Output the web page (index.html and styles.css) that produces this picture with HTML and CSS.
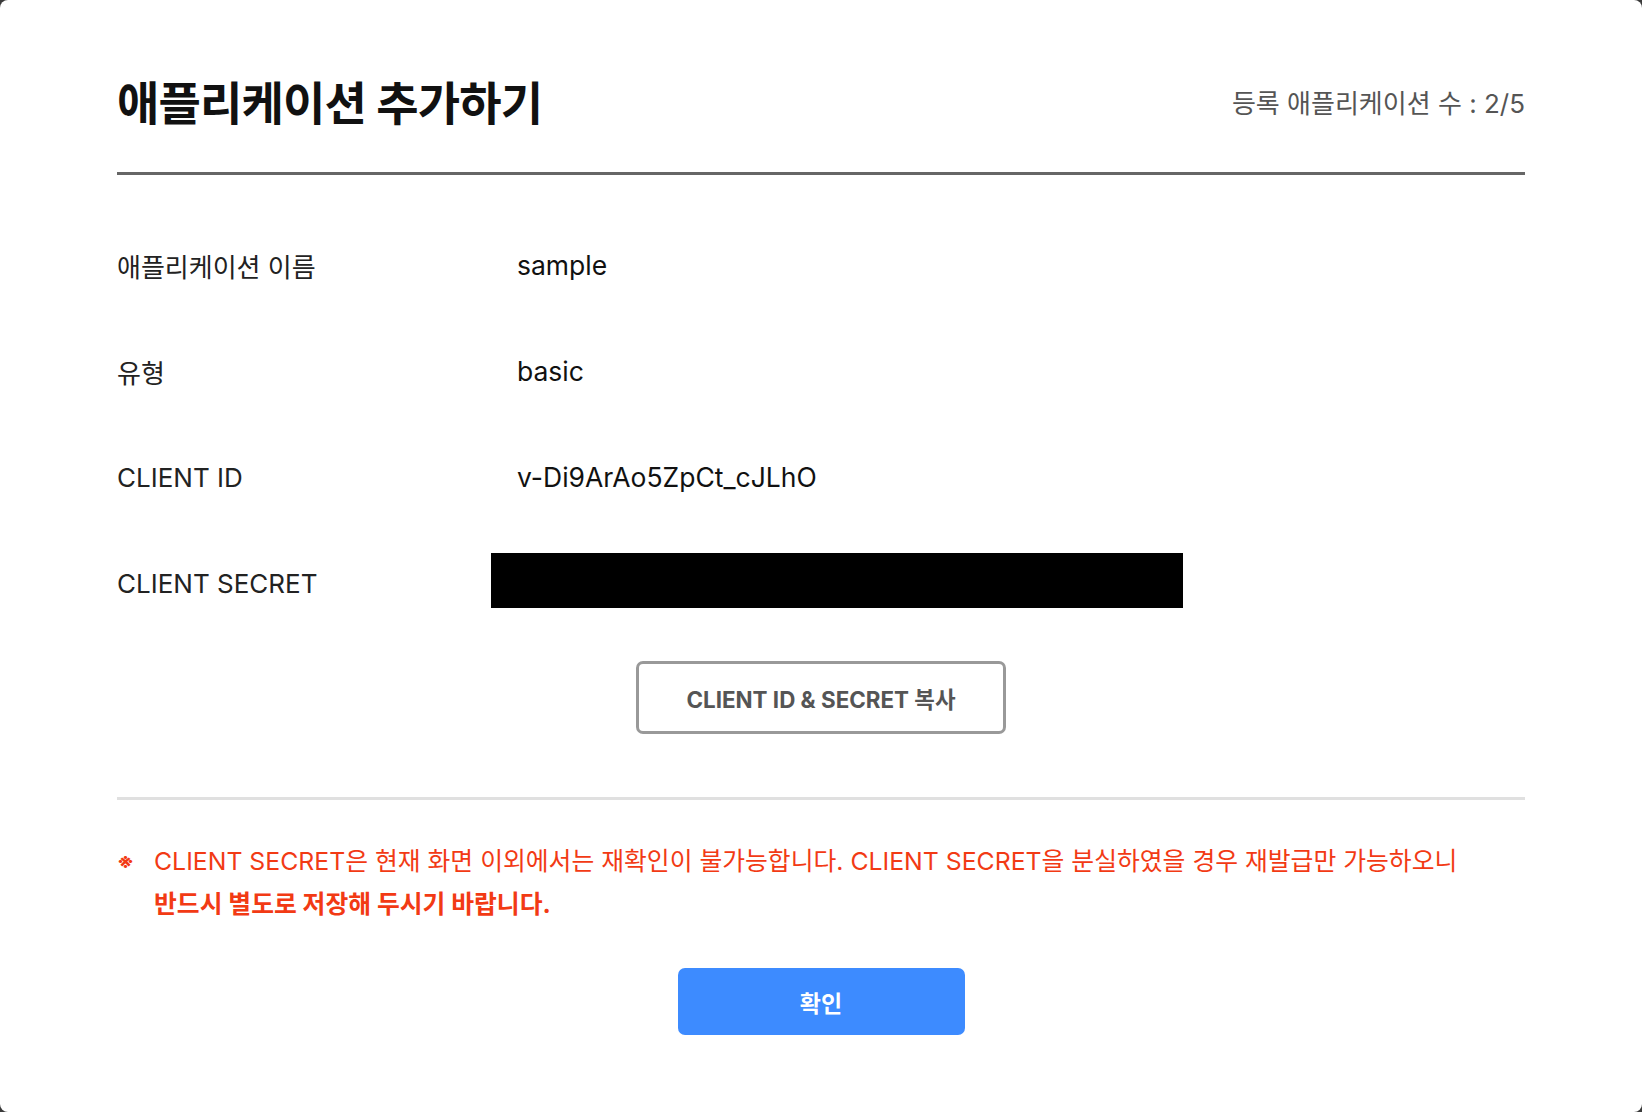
FILE: index.html
```html
<!DOCTYPE html>
<html lang="ko">
<head>
    <meta charset="UTF-8">
    <meta name="viewport" content="width=device-width, initial-scale=1.0">
    <title>애플리케이션 추가하기</title>
    <link rel="stylesheet" href="styles.css">
</head>
<body>
    <div class="modal">
        <!-- Title and registered app count -->
        <div class="modal-header">
            <h1 class="modal-title">애플리케이션 추가하기</h1>
            <span class="app-count">등록 애플리케이션 수 : 2/5</span>
        </div>

        <!-- Application details -->
        <div class="info-list">
            <div class="info-row">
                <div class="info-label">애플리케이션 이름</div>
                <div class="info-value">sample</div>
            </div>
            <div class="info-row">
                <div class="info-label">유형</div>
                <div class="info-value">basic</div>
            </div>
            <div class="info-row">
                <div class="info-label">CLIENT ID</div>
                <div class="info-value">v-Di9ArAo5ZpCt_cJLhO</div>
            </div>
            <div class="info-row">
                <div class="info-label">CLIENT SECRET</div>
                <div class="secret-box"></div>
            </div>
        </div>

        <div class="copy-wrap">
            <button class="btn-copy">CLIENT ID &amp; SECRET 복사</button>
        </div>

        <!-- Warning message -->
        <div class="notice">
            <span class="notice-mark">※</span>
            <p class="notice-text">CLIENT SECRET은 현재 화면 이외에서는 재확인이 불가능합니다. CLIENT SECRET을 분실하였을 경우 재발급만 가능하오니<br><b>반드시 별도로 저장해 두시기 바랍니다.</b></p>
        </div>

        <div class="confirm-wrap">
            <button class="btn-confirm">확인</button>
        </div>
    </div>
</body>
</html>
```

FILE: styles.css
```css
/* Page background behind the modal */
body {
    margin: 0;
    background: #3a3a3a;
    font-family: Inter, "Noto Sans CJK KR", sans-serif;
}
/* White modal filling the window */
.modal {
    min-height: 100vh;
    box-sizing: border-box;
    background: #fff;
    border-radius: 8px;
    padding: 0 117px;
}
/* Header row with a dark rule under it */
.modal-header {
    display: flex;
    justify-content: space-between;
    align-items: center;
    padding-top: 73px;
    padding-bottom: 39px;
    border-bottom: 3px solid #666;
}
.modal-title {
    margin: 0;
    font-size: 46px;
    line-height: 60px;
    font-weight: 700;
    color: #111;
    letter-spacing: -0.8px;
}
.app-count {
    font-size: 26px;
    color: #555;
    margin-top: -4px;
}
/* Detail rows */
.info-list {
    margin-top: 37px;
}
.info-row {
    display: flex;
    align-items: center;
    height: 106px;
}
.info-label {
    width: 374px;
    font-size: 26px;
    color: #222;
}
.info-value {
    padding-left: 26px;
    font-size: 26.5px;
    color: #111;
}
.secret-box {
    width: 692px;
    height: 55px;
    background: #000;
    margin-top: -5px;
}
/* Copy button */
.copy-wrap {
    display: flex;
    justify-content: center;
    margin-top: 25px;
    padding-bottom: 63px;
    border-bottom: 3px solid #e0e0e0;
}
.btn-copy {
    width: 370px;
    height: 73px;
    background: #fff;
    border: 3px solid #999;
    border-radius: 7px;
    font-family: inherit;
    font-size: 22.4px;
    font-weight: 700;
    color: #555;
    cursor: pointer;
}
/* Red warning text */
.notice {
    display: flex;
    margin-top: 40px;
    color: #f23a14;
    font-size: 24.8px;
    line-height: 43px;
}
.notice-mark {
    width: 37px;
    flex-shrink: 0;
    font-size: 21px;
    font-weight: 700;
}
.notice-text {
    margin: 0;
}
.notice-text b {
    font-weight: 700;
}
/* Confirm button */
.confirm-wrap {
    display: flex;
    justify-content: center;
    margin-top: 42px;
    padding-bottom: 76px;
}
.btn-confirm {
    width: 287px;
    height: 67px;
    background: #3d8bff;
    border: none;
    border-radius: 7px;
    font-family: inherit;
    font-size: 23px;
    font-weight: 700;
    color: #fff;
    cursor: pointer;
}
```
